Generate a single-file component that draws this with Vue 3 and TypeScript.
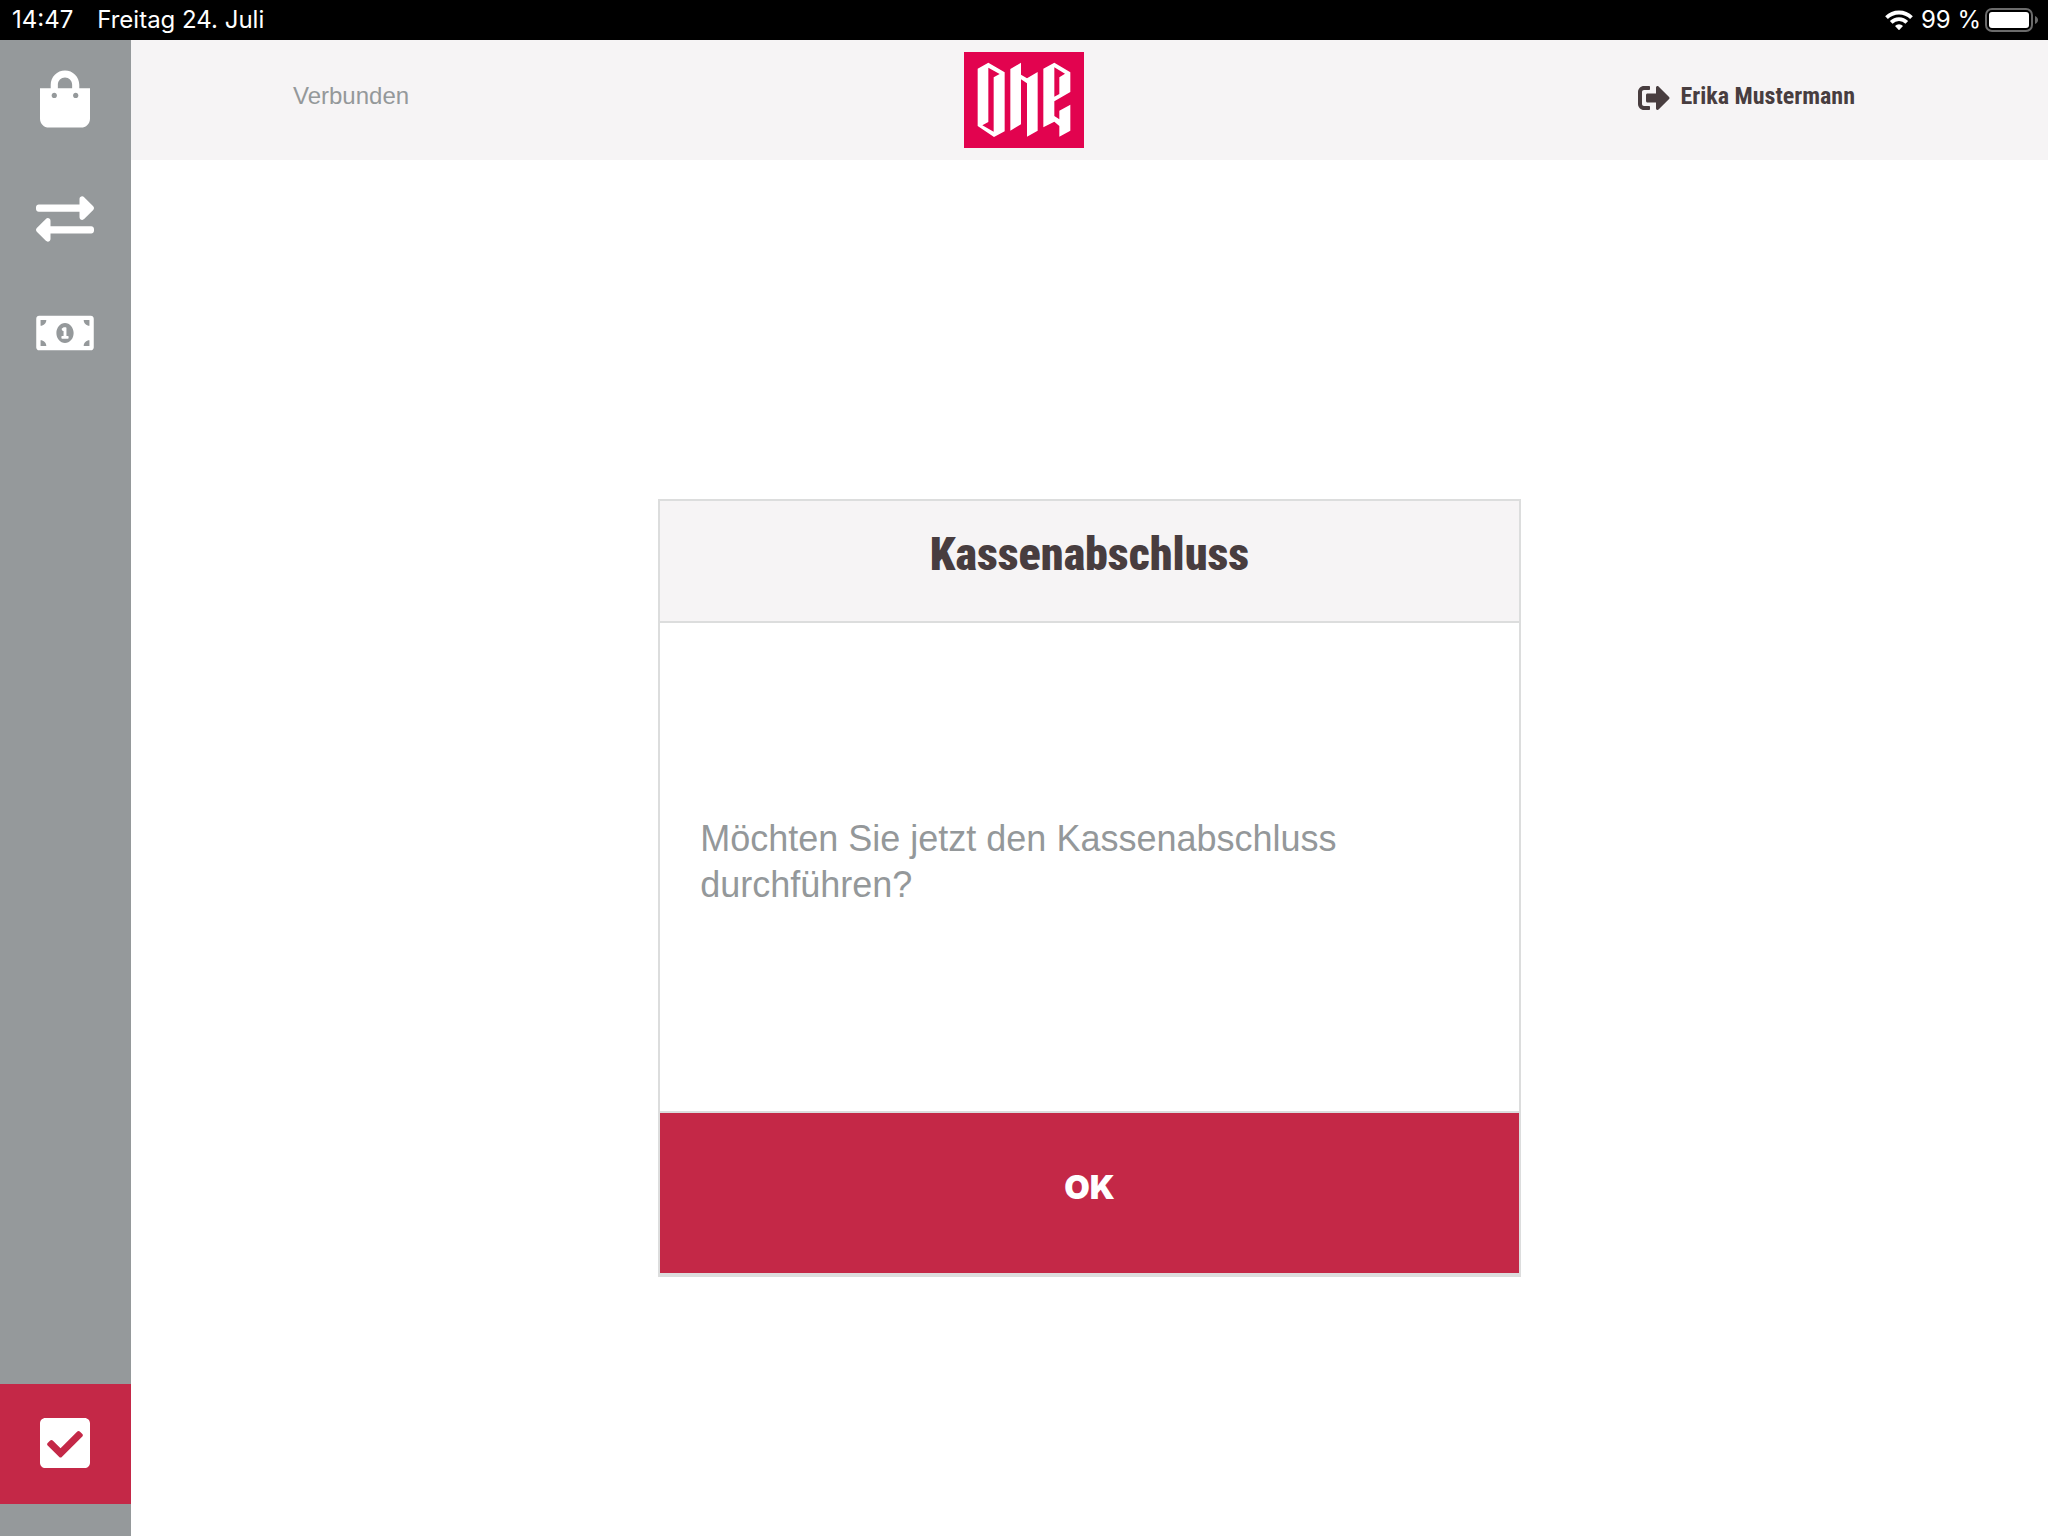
<script setup lang="ts">
interface NavItem {
  id: string
  label: string
  viewBox: string
  width: number
  height: number
  path: string
}

const navItems: NavItem[] = [
  {
    id: 'sale',
    label: 'Verkauf',
    viewBox: '0 0 448 512',
    width: 50,
    height: 58,
    path: 'M352 160v-32C352 57.42 294.579 0 224 0 153.42 0 96 57.42 96 128v32H0v272c0 44.183 35.817 80 80 80h288c44.183 0 80-35.817 80-80V160h-96zm-192-32c0-35.29 28.71-64 64-64s64 28.71 64 64v32H160v-32zm160 120c-13.255 0-24-10.745-24-24s10.745-24 24-24 24 10.745 24 24-10.745 24-24 24zm-192 0c-13.255 0-24-10.745-24-24s10.745-24 24-24 24 10.745 24 24-10.745 24-24 24z',
  },
  {
    id: 'transfer',
    label: 'Umbuchung',
    viewBox: '0 0 512 512',
    width: 58,
    height: 58,
    path: 'M0 168v-16c0-13.255 10.745-24 24-24h360V80c0-21.367 25.899-32.042 40.971-16.971l80 80c9.372 9.373 9.372 24.569 0 33.941l-80 80C409.956 271.982 384 261.456 384 240v-48H24c-13.255 0-24-10.745-24-24zm488 152H128v-48c0-21.314-25.862-32.08-40.971-16.971l-80 80c-9.372 9.373-9.372 24.569 0 33.941l80 80C102.057 463.997 128 453.437 128 432v-48h360c13.255 0 24-10.745 24-24v-16c0-13.255-10.745-24-24-24z',
  },
  {
    id: 'cash',
    label: 'Bargeld',
    viewBox: '0 0 640 512',
    width: 58,
    height: 46,
    path: 'M352 288h-16v-88c0-4.42-3.58-8-8-8h-13.58c-4.74 0-9.37 1.4-13.31 4.03l-15.33 10.22a7.994 7.994 0 0 0-2.22 11.09l8.88 13.31a7.994 7.994 0 0 0 11.09 2.22l.47-.31V288h-16c-4.42 0-8 3.58-8 8v16c0 4.42 3.58 8 8 8h64c4.42 0 8-3.58 8-8v-16c0-4.42-3.58-8-8-8zM608 64H32C14.33 64 0 78.33 0 96v320c0 17.67 14.33 32 32 32h576c17.67 0 32-14.33 32-32V96c0-17.67-14.33-32-32-32zM48 400v-64c35.35 0 64 28.65 64 64H48zm0-224v-64h64c0 35.35-28.65 64-64 64zm272 192c-53.02 0-96-50.15-96-112 0-61.86 42.98-112 96-112s96 50.13 96 112c0 61.87-43 112-96 112zm272 32h-64c0-35.35 28.65-64 64-64v64zm0-224c-35.35 0-64-28.65-64-64h64v64z',
  },
]
</script>

<template>
  <div class="app">
    <div class="status-bar">
      <div class="status-group status-left">
        <span>14:47</span>
        <span>Freitag 24. Juli</span>
      </div>
      <div class="status-group status-right">
        <svg class="wifi" viewBox="0 0 28 20" width="28" height="20" aria-hidden="true">
          <path d="M1.500 7.700a17.600 17.600 0 0 1 25 0M6.200 12.300a11 11 0 0 1 15.600 0" fill="none" stroke="#fff" stroke-width="3.800" />
          <path d="M14 20.300l-4-4.300a5.700 5.700 0 0 1 8 0z" fill="#fff" />
        </svg>
        <span>99 %</span>
        <svg class="battery" viewBox="0 0 53 24" width="53" height="24" aria-hidden="true">
          <rect x="1" y="1" width="46" height="22" rx="6" fill="none" stroke="#6b6b6b" stroke-width="2" />
          <rect x="4" y="4" width="40" height="16" rx="3" fill="#fff" />
          <path d="M50 8c4 1.500 4 6.500 0 8z" fill="#6b6b6b" />
        </svg>
      </div>
    </div>

    <div class="shell">
      <nav class="sidebar" aria-label="Hauptnavigation">
        <button v-for="item in navItems" :key="item.id" type="button" class="nav-item" :aria-label="item.label">
          <svg :viewBox="item.viewBox" :width="item.width" :height="item.height" aria-hidden="true">
            <path :d="item.path" fill="currentColor" />
          </svg>
        </button>
        <button type="button" class="nav-item nav-item-active" aria-label="Kassenabschluss" aria-current="page">
          <svg viewBox="0 0 448 512" width="50" height="58" aria-hidden="true">
            <path
              fill="currentColor"
              d="M400 480H48c-26.510 0-48-21.490-48-48V80c0-26.510 21.490-48 48-48h352c26.510 0 48 21.490 48 48v352c0 26.510-21.490 48-48 48zm-204.686-98.059l184-184c6.248-6.248 6.248-16.379 0-22.627l-22.627-22.627c-6.248-6.248-16.379-6.249-22.628 0L184 302.745l-70.059-70.059c-6.248-6.248-16.379-6.248-22.628 0l-22.627 22.627c-6.248 6.248-6.248 16.379 0 22.627l104 104c6.249 6.250 16.379 6.250 22.628.001z"
            />
          </svg>
        </button>
      </nav>

      <header class="header">
        <span class="connection">Verbunden</span>
        <svg class="logo" viewBox="42 48 360 288" width="120" height="96" role="img" aria-label="ONE">
          <rect x="42" y="48" width="360" height="288" fill="#e2034f" />
          <g fill="#fff" fill-rule="evenodd">
            <path d="M83 98L115 80L164 109V286L132 303L83 270ZM115 95V258L97 268L131 287V124L149 114Z" />
            <path d="M181 99L213 80V116L231 127L263 108V284L231 302V142L213 130V265L181 284Z" />
            <path d="M280 98L313 80L361 109V168L313 196V240L328 250V224L361 206V284L328 302V270L313 257L280 274ZM313 94V182L328 174V124L345 113Z" />
          </g>
        </svg>
        <button type="button" class="user">
          <svg viewBox="0 0 512 512" width="32" height="32" aria-hidden="true">
            <path
              fill="currentColor"
              d="M497 273L329 441c-15 15-41 4.500-41-17v-96H152c-13.300 0-24-10.700-24-24v-96c0-13.300 10.700-24 24-24h136V88c0-21.400 25.900-32 41-17l168 168c9.300 9.400 9.300 24.600 0 34zM192 436v-40c0-6.600-5.400-12-12-12H96c-17.700 0-32-14.300-32-32V160c0-17.700 14.300-32 32-32h84c6.600 0 12-5.400 12-12V76c0-6.600-5.400-12-12-12H96c-53 0-96 43-96 96v192c0 53 43 96 96 96h84c6.600 0 12-5.400 12-12z"
            />
          </svg>
          <span class="user-name">Erika Mustermann</span>
        </button>
      </header>

      <main class="content">
        <section class="card" aria-labelledby="card-title">
          <h1 id="card-title" class="card-title">Kassenabschluss</h1>
          <p class="card-body">Möchten Sie jetzt den Kassenabschluss durchführen?</p>
          <button type="button" class="card-action">OK</button>
        </section>
      </main>
    </div>
  </div>
</template>

<style>
body {
  margin: 0;
  background: #fff;
}
</style>

<style scoped>
.app {
  display: flex;
  flex-direction: column;
  min-height: 100vh;
  font-family: "Liberation Sans", Arial, sans-serif;
  color: #94989a;
}

button {
  margin: 0;
  padding: 0;
  border: 0;
  background: none;
  color: inherit;
  font: inherit;
  cursor: pointer;
}

.status-bar {
  display: flex;
  justify-content: space-between;
  align-items: center;
  height: 40px;
  padding: 0 10px 0 12px;
  background: #000;
  color: #fff;
  font-family: Inter, sans-serif;
  font-size: 24px;
  line-height: 40px;
}

.status-group {
  display: flex;
  align-items: center;
}

.status-left {
  gap: 24px;
}

.status-right {
  gap: 4px;
}

.wifi {
  margin-right: 4px;
}

.shell {
  flex: 1;
  display: grid;
  grid-template-columns: 131px 1fr;
  grid-template-rows: 120px 1fr;
}

.sidebar {
  grid-column: 1;
  grid-row: 1 / 3;
  z-index: 1;
  display: flex;
  flex-direction: column;
  padding-bottom: 32px;
  background: #95999b;
  color: #fff;
}

.nav-item {
  display: flex;
  justify-content: center;
  align-items: flex-start;
  height: 120px;
  padding: 30px 1px 0 0;
}

.nav-item-active {
  margin-top: auto;
  background: #c42847;
}

/* Spans the sidebar column too, so the logo sits in the middle of the screen. */
.header {
  grid-column: 1 / 3;
  grid-row: 1;
  display: grid;
  grid-template-columns: 1fr 120px 1fr;
  align-items: center;
  padding: 0 193px;
  background: #f6f4f5;
  font-size: 24px;
  line-height: 32px;
}

.connection {
  padding: 0 0 8px 100px;
}

.logo {
  display: block;
}

.user {
  justify-self: end;
  display: flex;
  align-items: center;
  gap: 10px;
  padding-bottom: 4px;
  color: #483d3f;
  font-family: "Roboto Condensed", Roboto, sans-serif;
  font-weight: 700;
}

.user-name {
  padding-bottom: 4px;
}

.content {
  grid-column: 2;
  grid-row: 2;
  display: flex;
  justify-content: center;
  align-items: center;
  padding-top: 80px;
}

.card {
  display: flex;
  flex-direction: column;
  box-sizing: border-box;
  width: 45%;
  border: 2px solid #dcdddd;
  border-bottom-width: 4px;
}

.card-title {
  margin: 0;
  padding: 25px 40px 39px;
  border-bottom: 2px solid #dcdddd;
  background: #f6f4f5;
  color: #483d3f;
  font-family: "Roboto Condensed", Roboto, sans-serif;
  font-size: 46px;
  font-weight: 900;
  line-height: 56px;
  text-align: center;
}

.card-body {
  display: flex;
  align-items: center;
  box-sizing: border-box;
  min-height: 490px;
  margin: 0;
  padding: 0 40px 10px;
  border-bottom: 2px solid #dcdddd;
  font-size: 36px;
  line-height: 46px;
}

.card-action {
  height: 160px;
  padding-bottom: 12px;
  background: #c42847;
  color: #fff;
  font-family: Inter, sans-serif;
  font-size: 33px;
  font-weight: 900;
}
</style>
